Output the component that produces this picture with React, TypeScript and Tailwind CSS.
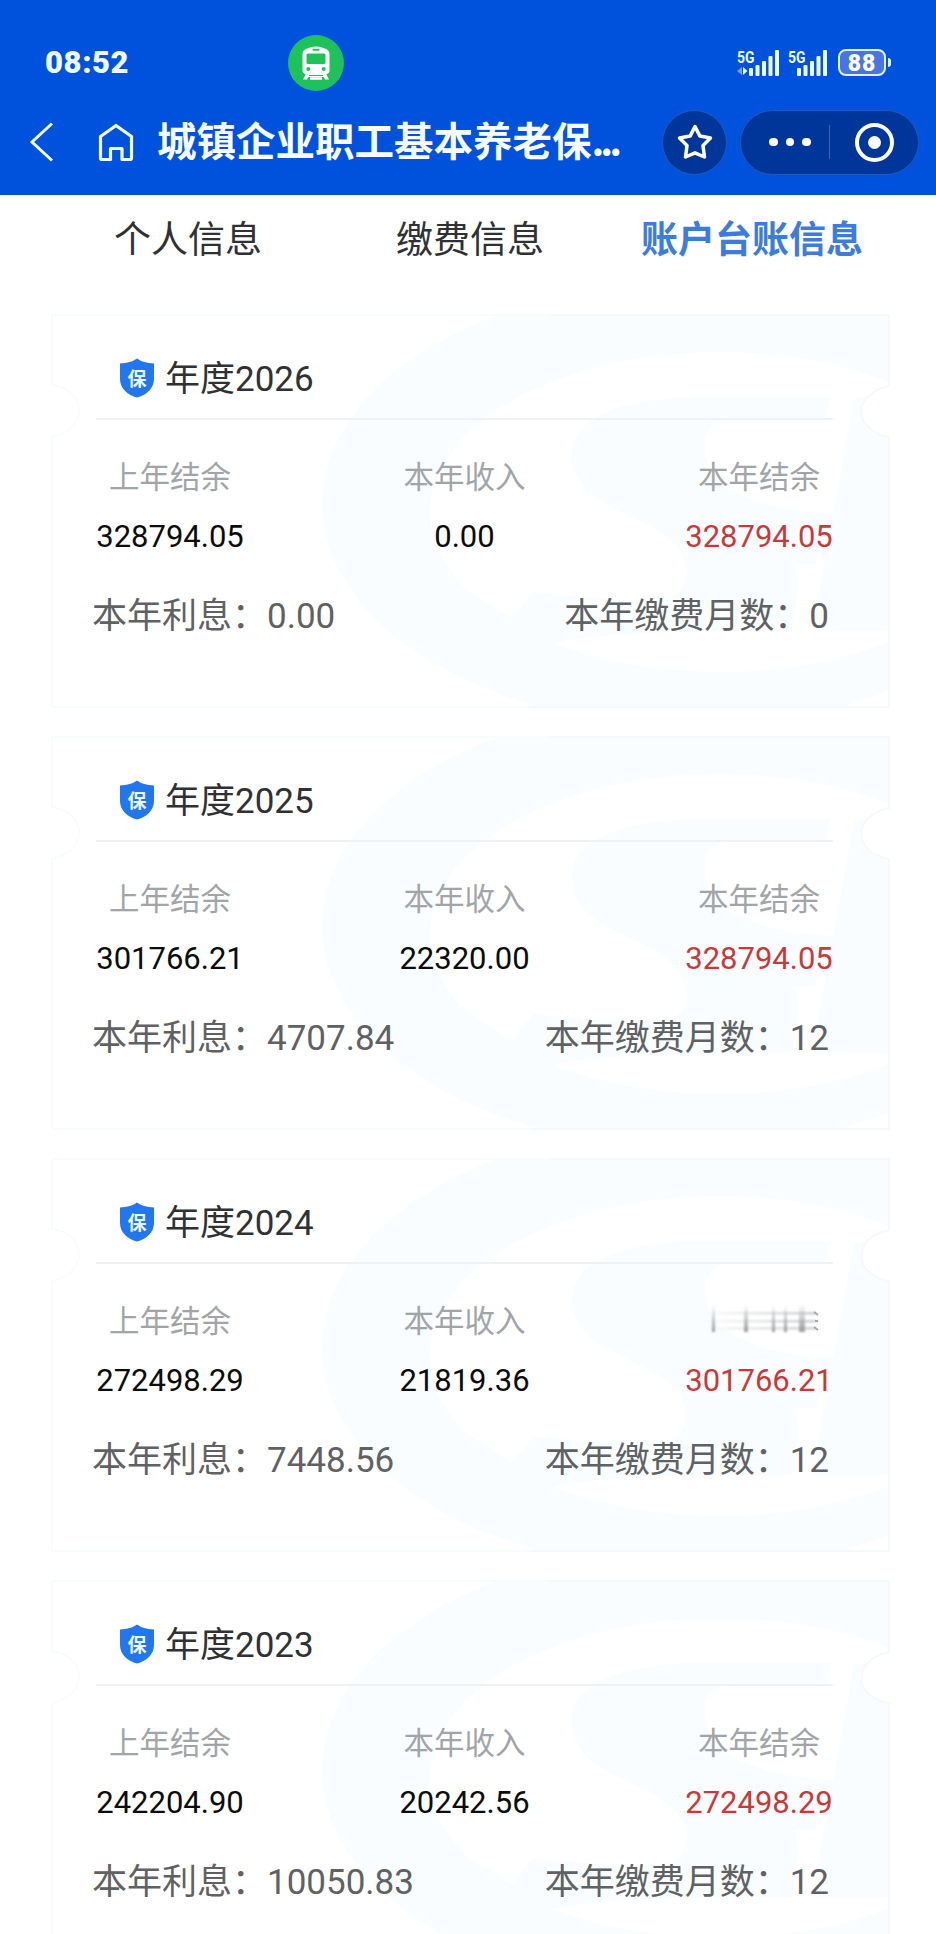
import React from "react";

interface YearRecord {
  year: number;
  lastBalance: string;
  income: string;
  balance: string;
  interest: string;
  months: number;
  smudged?: boolean;
}

const records: YearRecord[] = [
  { year: 2026, lastBalance: "328794.05", income: "0.00", balance: "328794.05", interest: "0.00", months: 0 },
  { year: 2025, lastBalance: "301766.21", income: "22320.00", balance: "328794.05", interest: "4707.84", months: 12 },
  { year: 2024, lastBalance: "272498.29", income: "21819.36", balance: "301766.21", interest: "7448.56", months: 12, smudged: true },
  { year: 2023, lastBalance: "242204.90", income: "20242.56", balance: "272498.29", interest: "10050.83", months: 12 },
];

const tabs = ["个人信息", "缴费信息", "账户台账信息"];

const TrainIcon = () => (
  <svg width="28" height="34" viewBox="0 0 28 34">
    <path d="M5 2.5Q14-1.5 23 2.5Q27.500 4 27.500 8V24Q27.500 28 24 28H4Q.5 28 .5 24V8Q.5 4 5 2.500Z" fill="#fff" />
    <rect x="4.500" y="7.500" width="19" height="10.500" rx="1.500" fill="#1fc15a" />
    <rect x="10.500" y="2.800" width="7" height="2" rx="1" fill="#1fc15a" />
    <circle cx="6.300" cy="23" r="2" fill="#1fc15a" />
    <circle cx="21.700" cy="23" r="2" fill="#1fc15a" />
    <path d="M4 27.500L1 33.500H5L6.500 31H21.500L23 33.500H27L24 27.500Z" fill="#fff" />
    <path d="M7 29.500H21" stroke="#1fc15a" strokeWidth="1" />
    <path d="M8 32.500H20" stroke="#fff" strokeWidth="2.500" />
  </svg>
);

const Signal = ({ arrows }: { arrows?: boolean }) => (
  <svg className="overflow-visible" width="44" height="28" viewBox="0 0 44 28" fill="#eafaff">
    <text x="0" y="13.500" fontSize="17" fontWeight="700" fontFamily="Roboto, sans-serif" textLength="17.500" lengthAdjust="spacingAndGlyphs">5G</text>
    {arrows && (
      <>
        <path d="M5 18V26L0 22Z" opacity=".5" />
        <path d="M6 18V26L10.500 22Z" />
      </>
    )}
    <rect x={arrows ? 12 : 9} y="19" width="4" height="8" rx="1" />
    <rect x={arrows ? 18.500 : 15.500} y="16" width="4" height="11" rx="1" />
    <rect x={arrows ? 25 : 22} y="12" width="4" height="15" rx="1" />
    <rect x={arrows ? 31.500 : 28.500} y="7" width="4" height="20" rx="1" />
    <rect x={arrows ? 38 : 35} y="1" width="4" height="26" rx="1" />
  </svg>
);

const StatusBar = () => (
  <div className="flex h-[100px] items-center pt-[25px]">
    <div className="w-[243px] pl-[45px] pt-[2px] font-[Roboto] text-[31px] font-black tracking-[0.6px] text-[#effcff]">08:52</div>
    <div className="ml-[45px] flex h-14 w-14 items-center justify-center rounded-full bg-[#1fc15a]">
      <TrainIcon />
    </div>
    <div className="ml-auto flex items-center pr-[45px]">
      <Signal arrows />
      <div className="ml-[7px]">
        <Signal />
      </div>
      <div className="ml-[6px] flex h-[27px] w-[48px] items-center justify-center rounded-lg border-[2.5px] border-[#dff4ff] bg-[#4a74e2] pt-[2px] font-[Roboto] text-[23px] font-black leading-none tracking-[1px] text-white">
        88
      </div>
      <div className="ml-[2px] h-[9px] w-[3px] rounded-r bg-[#dff4ff]" />
    </div>
  </div>
);

const NavBar = () => (
  <div className="flex h-[84px] items-center pl-7">
    <svg width="28" height="42" viewBox="0 0 28 42" fill="none" stroke="#f2fbff" strokeWidth="3">
      <path d="M24 2.500L4 21L24 39.500" />
    </svg>
    <svg className="ml-[41px]" width="38" height="40" viewBox="0 0 38 40" fill="none" stroke="#f2fbff" strokeWidth="3.200" strokeLinejoin="round">
      <path d="M3.500 14.500L19 3.500L34.500 14.500V36Q34.500 37.500 33 37.500H25V26.500H13.500V37.500H5Q3.500 37.500 3.500 36Z" />
    </svg>
    <h1 className="ml-[22px] w-[505px] whitespace-nowrap pb-[6px] text-[39.5px] font-bold leading-[56px] text-[#f7fcff]">
      城镇企业职工基本养老保<span className="tracking-[-4px]">...</span>
    </h1>
    <button className="flex h-[65px] w-[65px] items-center justify-center rounded-full border border-[#2458bb] bg-[#003599]">
      <svg width="38" height="38" viewBox="0 0 38 38" fill="none" stroke="#fff" strokeWidth="3.500" strokeLinejoin="round">
        <path d="M19 3.500L23.900 13.100L34.500 14.900L27 22.500L28.500 34L19 29.800L9.500 34L11 22.500L3.500 14.900L14.100 13.100Z" />
      </svg>
    </button>
    <div className="ml-[13px] flex h-[65px] w-[179px] items-center rounded-full border border-[#2458bb] bg-[#003599]">
      <div className="ml-[28px] flex gap-[8px]">
        <span className="h-[8.500px] w-[8.500px] rounded-full bg-white" />
        <span className="h-[8.500px] w-[8.500px] rounded-full bg-white" />
        <span className="h-[8.500px] w-[8.500px] rounded-full bg-white" />
      </div>
      <div className="ml-[18px] h-[34px] w-px bg-[#3f66b4]" />
      <div className="ml-[25px] flex h-[39px] w-[39px] items-center justify-center rounded-full border-[4.500px] border-white">
        <span className="h-[13px] w-[13px] rounded-full bg-white" />
      </div>
    </div>
  </div>
);

// ticket outline with the side notches and the SI emblem behind the text
const CardBackground = ({ id }: { id: number }) => (
  <svg className="absolute inset-0" width="840" height="395" viewBox="0 0 840 395" fill="none">
    <clipPath id={`ticket-${id}`}>
      <path d="M0 0H839V72C802 80 802 116 839 123V394H0Z" />
    </clipPath>
    <g clipPath={`url(#ticket-${id})`}>
      <ellipse cx="640" cy="190" rx="368" ry="222" fill="#f9fdff" />
      <ellipse cx="670" cy="198" rx="290" ry="160" fill="#fff" />
      <path
        d="M781 83H640C565 86 522 106 522 140C522 180 558 192 596 210C632 228 646 255 630 277C610 292 540 284 483 278L461 305L512 327C570 317 680 317 741 317C746 295 750 272 745 250L790 200C740 200 690 186 666 166C645 130 655 108 680 105H775Z"
        fill="#f9fdff"
      />
      <path d="M415 275L461 303L512 327L460 340Z" fill="#f9fdff" />
      <path d="M804 85L839 78V317H762Z" fill="#f9fdff" />
      <path d="M745 200H785L765 250H742Z" fill="#f9fdff" />
    </g>
    <path d="M500 1H839V72C802 80 802 116 839 123V393H480" stroke="#f6f9fb" strokeWidth="2" />
    <path d="M500 1H2V71C38 76 38 116 2 123V393H480" stroke="#f9fcfd" strokeWidth="2" />
  </svg>
);

const ShieldIcon = () => (
  <div className="relative flex h-[40px] w-[36px] items-center justify-center">
    <svg className="absolute inset-0" width="36" height="40" viewBox="0 0 36 40">
      <path d="M18 .5Q24 5 35 5.500V21C35 31 27 37 18 39.500C9 37 1 31 1 21V5.500Q12 5 18 .5Z" fill="#2377ed" />
    </svg>
    <span className="relative text-[19px] font-bold leading-none text-[#eaf7ff]">保</span>
  </div>
);

const SmudgedLabel = () => (
  <svg width="122" height="30" viewBox="0 0 122 30" fill="none">
    <defs>
      <linearGradient id="smudge" x1="0" y1="0" x2="0" y2="1">
        <stop offset="0" stopColor="#9b9da0" stopOpacity="0" />
        <stop offset="1" stopColor="#9b9da0" />
      </linearGradient>
      <linearGradient id="streak" x1="0" y1="0" x2="1" y2="0">
        <stop offset="0" stopColor="#c9cccd" stopOpacity="0" />
        <stop offset="1" stopColor="#c9cccd" />
      </linearGradient>
      <filter id="soft">
        <feGaussianBlur stdDeviation="0.9" />
      </filter>
    </defs>
    <g filter="url(#soft)">
      <g fill="url(#streak)">
        <rect x="4" y="8" width="114" height="2.500" />
        <rect x="4" y="16" width="114" height="2.500" />
        <rect x="4" y="23" width="114" height="2.500" />
      </g>
      <g fill="url(#smudge)">
        <rect x="14" y="1" width="3" height="27" />
        <rect x="46" y="1" width="4" height="27" />
        <rect x="74" y="1" width="3" height="27" />
        <rect x="86" y="1" width="3" height="27" />
        <rect x="101" y="1" width="6" height="27" />
      </g>
    </g>
    <path d="M116 8L120 11M117 17H120M116 23L120 26" stroke="#a5a7aa" strokeWidth="2" />
  </svg>
);

const Column = ({ label, value, red, smudged }: { label: string; value: string; red?: boolean; smudged?: boolean }) => (
  <div className="flex w-[150px] flex-col items-center whitespace-nowrap">
    <div className="flex h-11 items-center text-[30.5px] leading-[44px] text-[#a2a5a8]">
      {smudged ? <SmudgedLabel /> : label}
    </div>
    <div className={`mt-[18px] font-[Roboto] text-[31px] leading-[44px] ${red ? "text-[#c83a3a]" : "text-[#0c0c0c]"}`}>
      {value}
    </div>
  </div>
);

const YearCard = ({ record }: { record: YearRecord }) => (
  <div className="relative h-[395px] w-[840px] shrink-0">
    <CardBackground id={record.year} />
    <div className="relative">
      <div className="ml-[46px] mr-[57px] flex h-[106px] items-center border-b-2 border-[#eff1f3] pl-[23px] pt-[23px]">
        <ShieldIcon />
        <span className="ml-[10px] text-[35px] leading-[50px] text-[#303133]">
          年度<span className="font-[Roboto]">{record.year}</span>
        </span>
      </div>
      <div className="flex justify-between pl-[45px] pr-[56px] pt-[33px]">
        <Column label="上年结余" value={record.lastBalance} />
        <Column label="本年收入" value={record.income} />
        <Column label="本年结余" value={record.balance} red smudged={record.smudged} />
      </div>
      <div className="mt-[29px] flex justify-between pl-[42px] pr-[61px] text-[35px] leading-[50px] text-[#5f6163]">
        <span>
          本年利息：<span className="font-[Roboto]">{record.interest}</span>
        </span>
        <span>
          本年缴费月数：<span className="font-[Roboto]">{record.months}</span>
        </span>
      </div>
    </div>
  </div>
);

const App: React.FC = () => {
  return (
    <div className="h-[1934px] w-[936px] overflow-hidden bg-white font-['Noto_Sans_CJK_SC',sans-serif]">
      <header className="h-[195px] bg-[#0051db]">
        <StatusBar />
        <NavBar />
      </header>
      <nav className="ml-[47px] grid h-[119px] w-[846px] grid-cols-3 pt-[16px] text-center text-[37px] leading-[52px]">
        {tabs.map((tab, i) => (
          <div key={tab} className={i === 2 ? "whitespace-nowrap font-bold text-[#3d7cdd]" : "text-[#303133]"}>
            {tab}
          </div>
        ))}
      </nav>
      <main className="ml-[50px] flex flex-col gap-[27px]">
        {records.map((record) => (
          <YearCard key={record.year} record={record} />
        ))}
      </main>
    </div>
  );
};

export default App;
